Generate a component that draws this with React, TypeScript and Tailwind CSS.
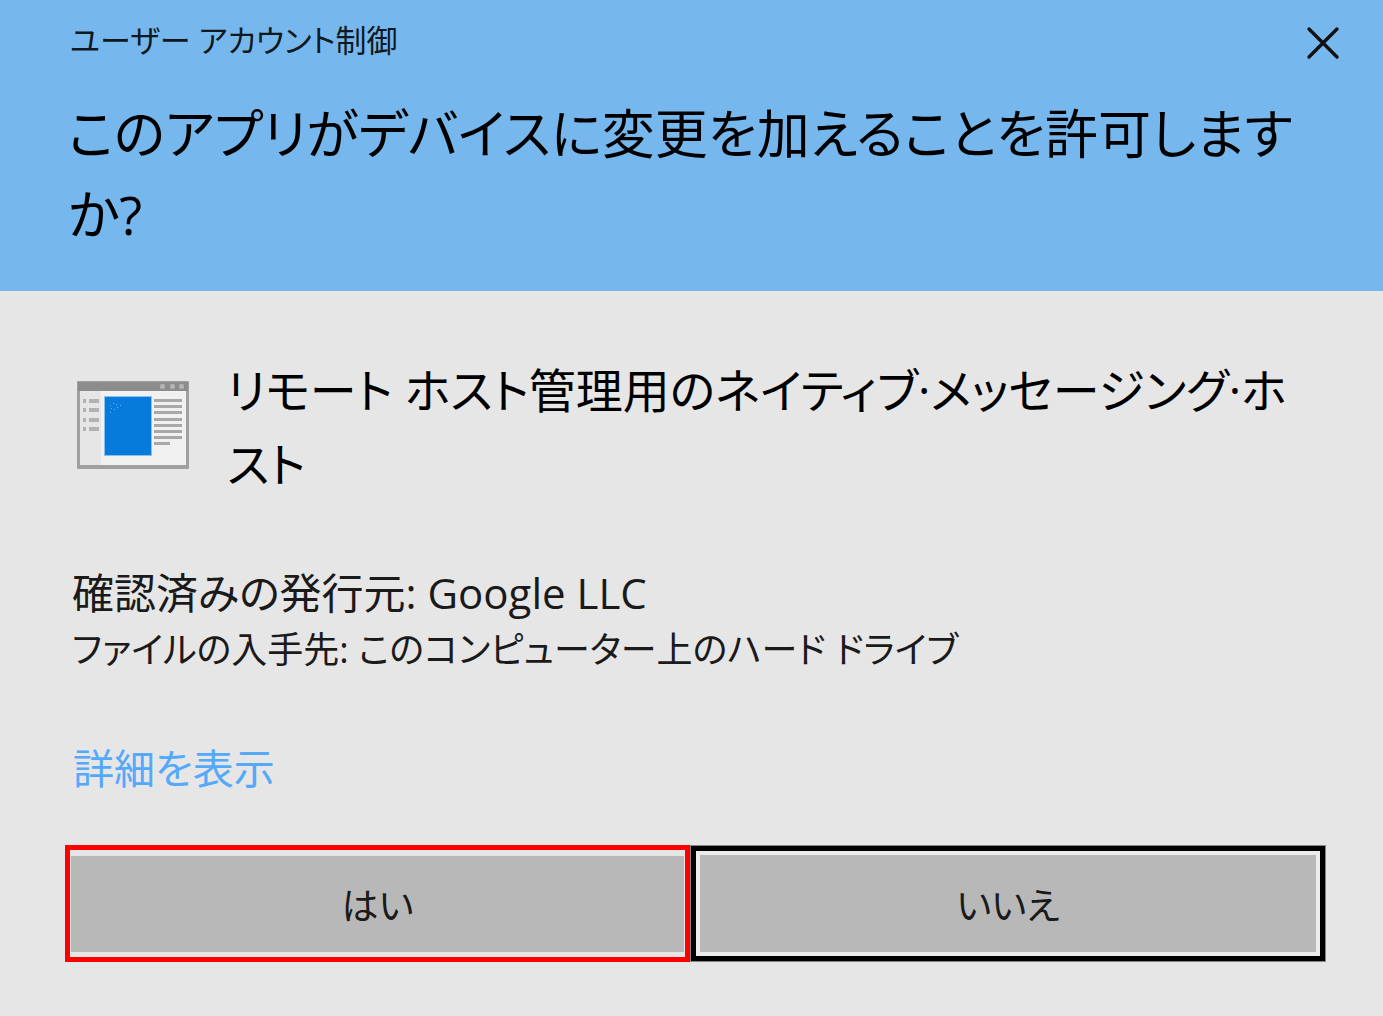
function AppIcon() {
  return (
    <svg viewBox="0 0 112 88" className="h-22 w-28 shrink-0" aria-hidden="true">
      <rect x="0" y="0" width="112" height="88" rx="1" fill="#a0a0a0" />
      <rect x="1" y="1" width="110" height="9" fill="#8c8c8c" />
      <rect x="3" y="10" width="106" height="74" fill="#f1f1f1" />
      <rect x="3" y="10" width="21" height="74" fill="#e6e6e6" />
      {[83, 93, 102].map((x) => (
        <rect key={x} x={x} y="3" width="5" height="5" rx="2" fill="#b4b4b4" />
      ))}
      {[18, 27, 37, 46].map((y) => (
        <g key={y} fill="#b2b2b2">
          <rect x="6" y={y} width="3" height="4" />
          <rect x="12" y={y} width="10" height="4" />
        </g>
      ))}
      <rect x="27" y="15" width="48" height="60" fill="#8cc0ee" />
      <rect x="28" y="16" width="46" height="58" fill="#067bdb" />
      {[
        [33, 24], [36, 22], [39, 23], [43, 24], [34, 27], [40, 26], [37, 28], [33, 31],
      ].map(([x, y]) => (
        <rect key={`${x}-${y}`} x={x} y={y} width="1" height="1" fill="#6bb5f2" />
      ))}
      {[18, 24, 30, 37, 43, 49, 55].map((y) => (
        <rect key={y} x="77" y={y} width="28" height="3" fill="#a8a8a8" />
      ))}
      <rect x="77" y="61" width="16" height="3" fill="#a8a8a8" />
    </svg>
  );
}

export default function App() {
  return (
    <div
      role="dialog"
      aria-labelledby="uac-question"
      className="min-h-screen bg-[#e6e6e6] font-['Open_Sans','Noto_Sans_CJK_JP',sans-serif] text-black [font-feature-settings:'palt']"
    >
      <header className="bg-[#76b8ed] pr-10 pb-9 pl-[68px]">
        <div className="flex items-center justify-between pt-4">
          <p className="pl-0.5 text-[31px] leading-[48px] whitespace-nowrap text-[#101820]">ユーザー アカウント制御</p>
          <button type="button" aria-label="閉じる" className="flex size-10 items-center justify-center">
            <svg viewBox="0 0 40 40" className="size-10" stroke="#111" strokeWidth="3.4" fill="none">
              <path d="M6 9 34 37M34 9 6 37" strokeLinecap="round" />
            </svg>
          </button>
        </div>
        <h1 id="uac-question" className="pt-[29px] text-[53px] leading-[81px] whitespace-nowrap">
          このアプリがデバイスに変更を加えることを許可します
          <br />
          か?
        </h1>
      </header>

      <main className="pt-[62px] pr-[57px] pb-[54px] pl-[65px]">
        <section className="flex items-start gap-[38px] pl-3">
          <div className="pt-7">
            <AppIcon />
          </div>
          <h2 className="text-[47px] leading-[74px] whitespace-nowrap">
            リモート ホスト管理用のネイティブ·メッセージング·ホ
            <br />
            スト
          </h2>
        </section>

        <div className="pt-[63px] pl-[7px] leading-[57px] whitespace-nowrap text-[#1a1a1a]">
          <p className="text-[42px]">確認済みの発行元: Google LLC</p>
          <p className="text-[36px]">ファイルの入手先: このコンピューター上のハード ドライブ</p>
        </div>

        <a href="#details" className="mt-[60px] ml-2 inline-block text-[41px] leading-[60px] text-[#55a9fb]">
          詳細を表示
        </a>

        <div className="mt-[47px] grid grid-cols-[625fr_636fr] text-[37px] text-[#1a1a1a]">
          <button type="button" className="h-[117px] border-5 border-[#ff0000] px-px pt-1.5 pb-[5px]">
            <span className="flex h-full items-center justify-center bg-[#b8b8b8] pt-1">はい</span>
          </button>
          <button type="button" className="h-[117px] border border-[#858585] bg-black p-[5px]">
            <span className="flex h-full items-center justify-center border-4 border-[#ececec] bg-[#b8b8b8] pt-1">
              いいえ
            </span>
          </button>
        </div>
      </main>
    </div>
  );
}
